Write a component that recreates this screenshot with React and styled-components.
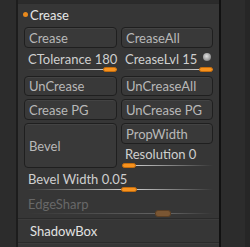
import React from "react";
import styled, { createGlobalStyle } from "styled-components";

const Global = createGlobalStyle`
  html, body { margin: 0; padding: 0; background: #2b2b2b; }
  body { font-family: Lato, "Noto Sans", sans-serif; }
`;

const Frame = styled.div`
  display: flex;
  width: 250px;
  height: 247px;
  overflow: hidden;
  background: #2b2b2b;
`;

const LeftStrip = styled.div`
  width: 16px;
  background: #2c2c2c;
  border-right: 2px solid #1d1d1d;
`;

const RightStrip = styled.div`
  width: 24px;
  background: #2c2c2c;
  border-left: 2px solid #111;
  border-right: 5px solid #262626;
`;

const Panel = styled.div`
  width: 201px;
  background: #363636;
  display: flex;
  flex-direction: column;
  border-top: 1px solid #2a2a2a;
  margin-top: 3px;
`;

const Header = styled.div`
  display: flex;
  align-items: center;
  height: 21px;
  padding-left: 5px;
  color: #e6e6e6;
  font-size: 13px;
  gap: 2px;
`;

const Dot = styled.span`
  width: 5px;
  height: 5px;
  border-radius: 50%;
  background: #e8891c;
`;

const Grid = styled.div`
  display: grid;
  grid-template-columns: 93px 92px;
  column-gap: 4px;
  padding: 0 6px;
  align-items: start;
`;

const Button = styled.div`
  box-sizing: border-box;
  height: ${(p) => p.$h || 21}px;
  margin-top: ${(p) => p.$mt || 0}px;
  grid-row: ${(p) => (p.$span ? `span ${p.$span}` : "auto")};
  border: 1px solid #1f1f1f;
  border-radius: 4px;
  background: #393939;
  box-shadow: inset 0 1px 0 #434343;
  color: #b8b8b8;
  font-size: 13px;
  display: flex;
  align-items: center;
  padding-left: 4px;
`;

const SliderBox = styled.div`
  position: relative;
  height: ${(p) => p.$h}px;
  color: ${(p) => (p.$disabled ? "#686868" : "#cfcfcf")};
  font-size: 13px;
  grid-column: ${(p) => (p.$full ? "1 / span 2" : "auto")};
`;

const SliderLabel = styled.div`
  padding-left: 4px;
  padding-top: ${(p) => p.$pt}px;
  line-height: 16px;
  white-space: nowrap;
`;

const Track = styled.div`
  position: absolute;
  left: 3px;
  right: 0;
  bottom: ${(p) => p.$b}px;
  height: 1px;
`;

const Thumb = styled.div`
  position: absolute;
  top: ${(p) => (p.$disabled ? -3 : -2)}px;
  width: ${(p) => p.$w}px;
  height: ${(p) => (p.$disabled ? 7 : 5)}px;
  border-radius: 3px;
  background: ${(p) => (p.$disabled ? "#7a5633" : "#f7921e")};
  border: 1px solid ${(p) => (p.$disabled ? "#5b3f24" : "#c66d0c")};
  box-sizing: border-box;
`;

const Knob = styled.div`
  position: absolute;
  right: 2px;
  top: 5px;
  width: 8px;
  height: 8px;
  border-radius: 50%;
  background: radial-gradient(circle at 45% 40%, #e0e0e0 0%, #a0a0a0 55%, #555 100%);
`;

const Separator = styled.div`
  height: 1px;
  background: #2a2a2a;
  border-bottom: 1px solid #3c3c3c;
`;

const SubHeader = styled.div`
  height: 22px;
  display: flex;
  align-items: center;
  padding-left: 12px;
  color: #e2e2e2;
  font-size: 13px;
`;

function Slider({ label, left, tw = 14, disabled, knob, full, h, b, pt }) {
  const c = disabled ? "rgba(150,150,150,0.45)" : "rgba(215,215,215,0.9)";
  const bg = `linear-gradient(to right, rgba(200,200,200,0) 0px, ${c} ${left}px, ${c} ${left + tw}px, rgba(200,200,200,0) 100%)`;
  return (
    <SliderBox $disabled={disabled} $full={full} $h={h}>
      <SliderLabel $pt={pt}>{label}</SliderLabel>
      {knob && <Knob />}
      <Track $b={b} style={{ background: bg }}>
        <Thumb $disabled={disabled} $w={tw} style={{ left }} />
      </Track>
    </SliderBox>
  );
}

export default function App() {
  return (
    <>
      <Global />
      <Frame>
        <LeftStrip />
        <Panel>
          <Header>
            <Dot />
            Crease
          </Header>
          <Grid>
            <Button $mt={2}>Crease</Button>
            <Button $mt={2}>CreaseAll</Button>
            <Slider label="CTolerance 180" left={76} h={28} pt={3} b={6} />
            <Slider label="CreaseLvl 15" left={75} knob h={28} pt={3} b={6} />
            <Button $h={20}>UnCrease</Button>
            <Button $h={20}>UnCreaseAll</Button>
            <Button $mt={3}>Crease PG</Button>
            <Button $mt={3}>UnCrease PG</Button>
            <Button $mt={3} $h={45} $span={2}>Bevel</Button>
            <Button $mt={3}>PropWidth</Button>
            <Slider label="Resolution 0" left={-2} h={26} pt={2} b={4} />
            <Slider label="Bevel Width 0.05" left={94} tw={16} full h={24} pt={1} b={4} />
            <Slider label="EdgeSharp" left={128} tw={16} full disabled h={24} pt={2} b={4} />
          </Grid>
          <Separator />
          <SubHeader>ShadowBox</SubHeader>
          <Separator />
        </Panel>
        <RightStrip />
      </Frame>
    </>
  );
}
